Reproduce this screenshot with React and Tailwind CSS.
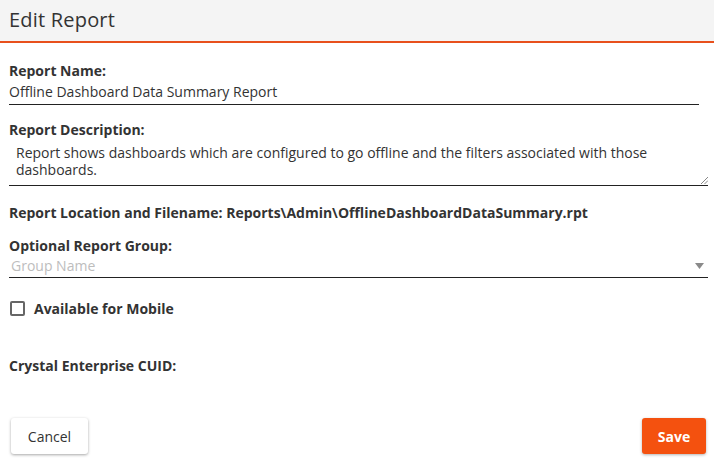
// App.jsx
export default function App() {
  return (
    <div className="w-[714px] h-[469px] bg-white text-[#333] flex flex-col" style={{ fontFamily: '"Open Sans", sans-serif' }}>
      {/* Header */}
      <div className="h-[43px] bg-[#f4f4f4] border-b-2 border-[#e8501c] flex items-center px-[9px] pb-[2px] shrink-0">
        <h1 className="text-[20px] text-[#333] leading-none tracking-[0.2px]">Edit Report</h1>
      </div>

      <div className="flex flex-col pl-[9px] pr-[6px] pt-[18px]">
        {/* Report Name */}
        <label className="text-[14px] font-bold leading-[19px]">Report Name:</label>
        <div className="mr-[9px] border-b border-[#222] text-[14px] leading-[19px] pt-[2px] pb-[3px]">
          Offline Dashboard Data Summary Report
        </div>

        {/* Report Description */}
        <label className="text-[14px] font-bold leading-[19px] mt-[15px]">Report Description:</label>
        <div className="relative border-b border-[#222] text-[14px] leading-[17px] pl-[7px] pr-[40px] pt-[5px] pb-[7px]">
          Report shows dashboards which are configured to go offline and the filters associated with those dashboards.
          <svg className="absolute right-0 bottom-[1px]" width="8" height="8" viewBox="0 0 8 8">
            <line x1="1" y1="8" x2="8" y2="1" stroke="#888" strokeWidth="1" />
            <line x1="4.5" y1="8" x2="8" y2="4.5" stroke="#888" strokeWidth="1" />
          </svg>
        </div>

        {/* Location */}
        <div className="text-[14px] font-bold leading-[19px] mt-[17px]">
          Report Location and Filename: Reports\Admin\OfflineDashboardDataSummary.rpt
        </div>

        {/* Group */}
        <label className="text-[14px] font-bold leading-[19px] mt-[14px]">Optional Report Group:</label>
        <div className="flex items-center justify-between border-b border-[#222] pt-px pb-[2px] pl-[2px] pr-[4px]">
          <span className="text-[14px] leading-[19px] text-[#bdbdbd]">Group Name</span>
          <svg width="9" height="6" viewBox="0 0 9 6">
            <polygon points="0,0 9,0 4.5,6" fill="#8a8a8a" />
          </svg>
        </div>

        {/* Checkbox */}
        <div className="flex items-center gap-[9px] mt-[21px] pl-px">
          <div className="w-[15px] h-[15px] border-2 border-[#666] rounded-[2px]" />
          <span className="text-[14px] font-bold leading-[19px]">Available for Mobile</span>
        </div>

        {/* CUID */}
        <div className="text-[14px] font-bold leading-[19px] mt-[38px]">Crystal Enterprise CUID:</div>
      </div>

      {/* Buttons */}
      <div className="flex justify-between items-center pl-[11px] pr-[8px] mt-[43px]">
        <button className="w-[77px] h-[36px] bg-white rounded-[3px] shadow-[0_1px_3px_rgba(0,0,0,0.35)] text-[14px] text-[#333]">
          Cancel
        </button>
        <button className="w-[64px] h-[36px] bg-[#f4510f] rounded-[3px] shadow-[0_1px_3px_rgba(0,0,0,0.3)] text-[14px] font-bold text-white">
          Save
        </button>
      </div>
    </div>
  )
}
